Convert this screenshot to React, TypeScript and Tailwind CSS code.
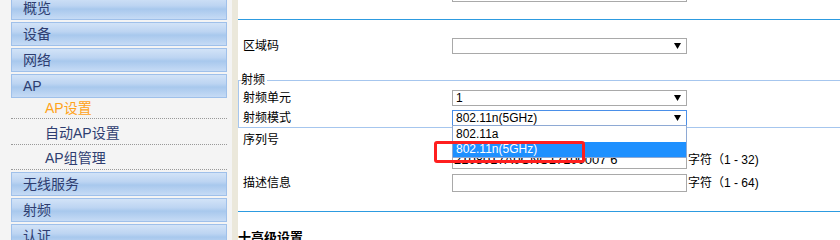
import React from "react";

function Arrow() {
  return (
    <svg width="7" height="6" viewBox="0 0 7 6" className="absolute right-[5px] top-[4px]">
      <polygon points="0,0 7,0 3.5,6" fill="#000" />
    </svg>
  );
}

function Sel({ value, focus }: { value: string; focus?: boolean }) {
  return (
    <div
      className={
        focus
          ? "relative flex h-[16px] w-[235px] items-center border border-[#4a8fe8] bg-white pl-[3px] text-[12px] leading-none text-black"
          : "relative flex h-[16px] w-[235px] items-center border border-[#a9a9a9] bg-white pl-[3px] text-[12px] leading-none text-black"
      }
    >
      <span>{value}</span>
      <Arrow />
    </div>
  );
}

function NavBtn({ label }: { label: string }) {
  return (
    <div className="flex h-[24px] items-center border border-[#9fc0ea] bg-[linear-gradient(to_bottom,#d2e3f7_0%,#bcd4f2_40%,#a8c8ed_55%,#c6dbf5_100%)] pl-[11px] text-[14px] text-[#2e3d70]">
      {label}
    </div>
  );
}

export default function App() {
  return (
    <div className="flex h-[240px] w-[840px] overflow-hidden bg-white font-['Liberation_Sans','Noto_Sans_CJK_SC',sans-serif]">
      {/* Sidebar */}
      <div className="w-[232px] shrink-0 bg-[#f4f4f4] pl-[11px] pr-[5px]">
        <div className="-mt-[4px] flex flex-col gap-[2px]">
          <NavBtn label="概览" />
          <NavBtn label="设备" />
          <NavBtn label="网络" />
          <NavBtn label="AP" />
        </div>
        <div className="flex h-[21px] items-center border-b border-dotted border-[#999] pl-[34px] text-[14px] text-[#ffa31a]">
          AP设置
        </div>
        <div className="flex h-[26px] items-center border-b border-dotted border-[#999] pl-[34px] pt-[3px] text-[14px] text-[#2e3d70]">
          自动AP设置
        </div>
        <div className="flex h-[25px] items-center border-b border-dotted border-[#999] pl-[34px] pt-[3px] text-[14px] text-[#2e3d70]">
          AP组管理
        </div>
        <div className="mt-[2px] flex flex-col gap-[2px]">
          <NavBtn label="无线服务" />
          <NavBtn label="射频" />
          <NavBtn label="认证" />
        </div>
      </div>
      <div className="w-[6px] shrink-0 bg-[#ebe8db]" />

      {/* Content */}
      <div className="min-w-0 flex-1 text-[12px] text-black">
        <div className="flex h-[20px] items-end border-b border-[#2d9be0] pl-[214px]">
          <div className="mb-[17px] h-[16px] w-[235px] shrink-0 border border-[#a9a9a9] bg-white" />
        </div>

        <div className="mt-[18px] flex h-[16px] items-center">
          <div className="w-[214px] pl-[5px]">区域码</div>
          <Sel value="" />
        </div>

        <fieldset className="mt-[18px] border-y border-l border-[#a6c6ee] pb-[1px]">
          <legend className="ml-[2px] pr-[2px] leading-[16px]">射频</legend>
          <div className="mt-[2px] flex h-[16px] items-center">
            <div className="w-[213px] pl-[4px]">射频单元</div>
            <Sel value="1" />
          </div>
          <div className="mt-[4px] flex h-[16px] items-center">
            <div className="w-[213px] pl-[4px]">射频模式</div>
            <div className="relative z-10">
              <Sel value="802.11n(5GHz)" focus />
              <div className="absolute left-0 top-[15px] w-[235px] border border-[#8ea9d4] bg-white text-[12px] leading-[15px]">
                <div className="h-[16px] pl-[3px] pt-[1px]">802.11a</div>
                <div className="h-[15px] bg-[#1e90ff] pl-[3px] text-white">802.11n(5GHz)</div>
              </div>
              <div className="absolute left-[-18px] top-[31px] h-[22px] w-[151px] rounded-[3px] border-[3px] border-[#ff1f1f]" />
            </div>
          </div>
        </fieldset>

        <div className="mt-[4px] flex">
          <div className="w-[214px] pl-[5px] leading-[16px]">序列号</div>
          <div className="mt-[19px] flex items-center">
            <div className="h-[18px] w-[235px] border border-[#a9a9a9] bg-white pl-[1px] text-[13px] leading-[16px]">
              2108017A0CNC17100007 6
            </div>
            <span className="pl-[1px]">字符（1 - 32)</span>
          </div>
        </div>

        <div className="mt-[5px] flex items-center">
          <div className="w-[214px] pl-[5px]">描述信息</div>
          <div className="h-[18px] w-[235px] border border-[#a9a9a9] bg-white" />
          <span className="pl-[1px]">字符（1 - 64)</span>
        </div>

        <div className="mt-[19px] border-t border-[#2d9be0]" />

        <div className="mt-[18px] text-[13px] font-bold leading-[16px]">十高级设置</div>
      </div>
    </div>
  );
}
